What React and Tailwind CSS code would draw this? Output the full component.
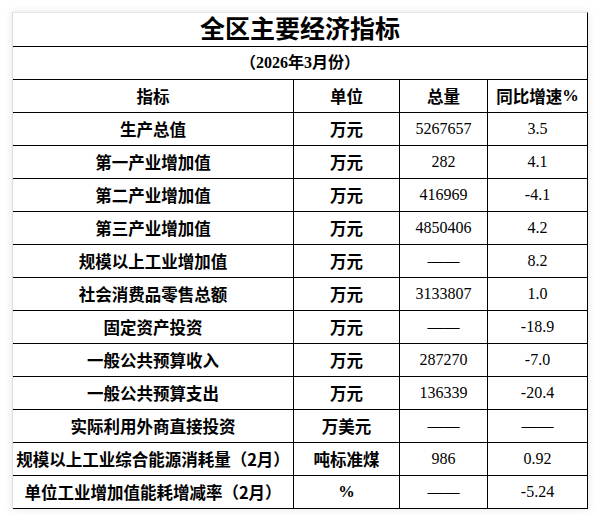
const rows = [
  { name: '生产总值', unit: '万元', total: '5267657', rate: '3.5' },
  { name: '第一产业增加值', unit: '万元', total: '282', rate: '4.1' },
  { name: '第二产业增加值', unit: '万元', total: '416969', rate: '-4.1' },
  { name: '第三产业增加值', unit: '万元', total: '4850406', rate: '4.2' },
  { name: '规模以上工业增加值', unit: '万元', total: '——', rate: '8.2' },
  { name: '社会消费品零售总额', unit: '万元', total: '3133807', rate: '1.0' },
  { name: '固定资产投资', unit: '万元', total: '——', rate: '-18.9' },
  { name: '一般公共预算收入', unit: '万元', total: '287270', rate: '-7.0' },
  { name: '一般公共预算支出', unit: '万元', total: '136339', rate: '-20.4' },
  { name: '实际利用外商直接投资', unit: '万美元', total: '——', rate: '——' },
  { name: '规模以上工业综合能源消耗量（2月）', unit: '吨标准煤', total: '986', rate: '0.92' },
  { name: '单位工业增加值能耗增减率（2月）', unit: '%', total: '——', rate: '-5.24' },
]

const hei = "font-['Noto_Sans_CJK_SC',sans-serif] font-bold"
const song = "font-['Liberation_Serif','Noto_Sans_CJK_SC',serif]"

export default function App() {
  return (
    <div className="min-h-screen bg-white pt-[12px] pl-[12px] text-black">
      <div className="w-[576px] border-l border-t border-l-[#dcdcdc] border-t-[#e4e4e4] border-r border-r-black shadow-[0_0_8px_rgba(0,0,0,0.10)]">
        {/* 标题 */}
        <div className={`h-[34px] border-b border-black flex items-center justify-center text-[25px] leading-none ${song} font-bold`}>
          全区主要经济指标
        </div>
        <div className={`h-[33px] border-b border-black flex items-center justify-center text-[16px] leading-none ${song} font-bold`}>
          （2026年3月份）
        </div>

        {/* 表头 */}
        <div className="flex h-[33px] border-b border-black text-[16.5px] leading-none">
          <div className={`w-[281px] border-r border-black flex items-center justify-center ${hei}`}>指标</div>
          <div className={`w-[106px] border-r border-black flex items-center justify-center ${hei}`}>单位</div>
          <div className={`w-[88px] border-r border-black flex items-center justify-center ${hei}`}>总量</div>
          <div className={`w-[99px] flex items-center justify-center ${hei}`}>
            同比增速<span className={`${song} font-bold`}>%</span>
          </div>
        </div>

        {/* 数据 */}
        {rows.map((r) => (
          <div key={r.name} className="flex h-[33px] border-b border-black leading-none">
            <div className={`w-[281px] border-r border-black flex items-center justify-center whitespace-nowrap text-[16.5px] ${hei}`}>
              {r.name}
            </div>
            <div className={`w-[106px] border-r border-black flex items-center justify-center text-[16.5px] ${r.unit === '%' ? `${song} font-bold` : hei}`}>
              {r.unit}
            </div>
            <div className={`w-[88px] border-r border-black flex items-center justify-center text-[16px] ${song}`}>
              {r.total}
            </div>
            <div className={`w-[99px] flex items-center justify-center text-[16px] ${song}`}>
              {r.rate}
            </div>
          </div>
        ))}
      </div>
    </div>
  )
}
